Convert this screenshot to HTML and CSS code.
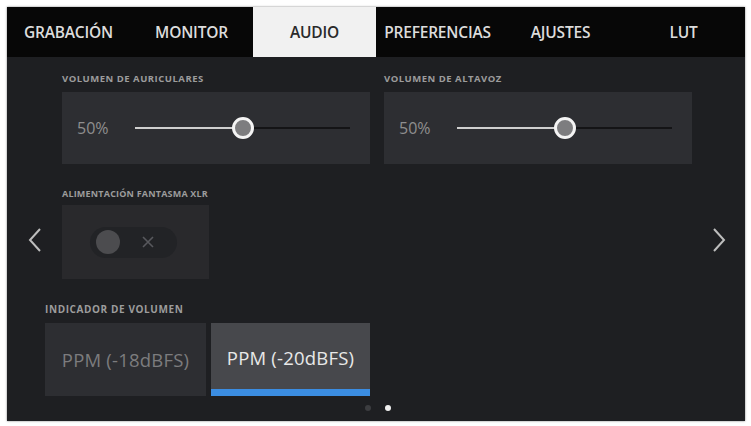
FILE: index.html
```html
<!DOCTYPE html>
<html lang="es">
<head>
<meta charset="utf-8">
<title>Audio</title>
<link rel="stylesheet" href="styles.css">
</head>
<body>
<div class="screen">
  <nav class="tabs">
    <div class="tab">GRABACIÓN</div>
    <div class="tab">MONITOR</div>
    <div class="tab active">AUDIO</div>
    <div class="tab">PREFERENCIAS</div>
    <div class="tab">AJUSTES</div>
    <div class="tab">LUT</div>
  </nav>
  <main class="content">
    <div class="row sliders">
      <section class="field">
        <div class="label">VOLUMEN DE AURICULARES</div>
        <div class="card slider-card">
          <span class="value">50%</span>
          <div class="track"><span class="fill" style="width:50%"></span><span class="thumb" style="left:50%"></span></div>
        </div>
      </section>
      <section class="field">
        <div class="label">VOLUMEN DE ALTAVOZ</div>
        <div class="card slider-card">
          <span class="value">50%</span>
          <div class="track"><span class="fill" style="width:50%"></span><span class="thumb" style="left:50%"></span></div>
        </div>
      </section>
    </div>
    <section class="field phantom">
      <div class="label label-2">ALIMENTACIÓN FANTASMA XLR</div>
      <div class="card toggle-card">
        <div class="toggle">
          <span class="knob"></span>
          <svg class="cross" width="12" height="12" viewBox="0 0 12 12"><path d="M1 1 L11 11 M11 1 L1 11" stroke="#58595d" stroke-width="1.6" fill="none"/></svg>
        </div>
      </div>
    </section>
    <section class="field meter">
      <div class="label label-3">INDICADOR DE VOLUMEN</div>
      <div class="options">
        <div class="option">PPM (-18dBFS)</div>
        <div class="option selected">PPM (-20dBFS)</div>
      </div>
    </section>
    <div class="dots"><span class="dot"></span><span class="dot on"></span></div>
    <svg class="chev chev-left" width="14" height="26" viewBox="0 0 14 26"><path d="M12 2 L2 13 L12 24" fill="none" stroke="#bdbdbd" stroke-width="2"/></svg>
    <svg class="chev chev-right" width="14" height="26" viewBox="0 0 14 26"><path d="M2 2 L12 13 L2 24" fill="none" stroke="#bdbdbd" stroke-width="2"/></svg>
  </main>
</div>
</body>
</html>
```
FILE: styles.css
```css
html, body {
  margin: 0;
  background: #ffffff;
}
body {
  padding: 7px 6px 5px 7px;
  font-family: "Open Sans", "Liberation Sans", sans-serif;
}
.screen {
  width: 738px;
  height: 414px;
  background: #1e1f22;
  box-shadow: 0 0 2px rgba(0,0,0,0.5);
  display: flex;
  flex-direction: column;
  overflow: hidden;
}
.tabs {
  display: grid;
  grid-template-columns: repeat(6, 1fr);
  height: 50px;
  background: #070707;
}
.tab {
  display: flex;
  align-items: center;
  justify-content: center;
  color: #dcdcdc;
  font-size: 15.5px;
  font-weight: 600;
  letter-spacing: -0.2px;
}
.tab.active {
  background: #f1f1f1;
  color: #2a2a2a;
}
.content {
  position: relative;
  flex: 1;
  display: flex;
  flex-direction: column;
  padding-top: 17px;
}
.row {
  display: flex;
  gap: 14px;
  padding-left: 55px;
}
.label {
  color: #9c9c9c;
  font-size: 9.5px;
  font-weight: 700;
  letter-spacing: 0.5px;
  line-height: 10px;
  height: 10px;
  margin-bottom: 8px;
}
.card {
  background: #2d2e32;
}
.slider-card {
  width: 308px;
  height: 72px;
  display: flex;
  align-items: center;
  padding-left: 15px;
  padding-right: 20px;
  box-sizing: border-box;
}
.value {
  width: 58px;
  color: #8f8f8f;
  font-size: 16px;
}
.track {
  position: relative;
  flex: 1;
  height: 2px;
  background: #141416;
}
.fill {
  position: absolute;
  left: 0;
  top: 0;
  height: 2px;
  background: #cfcfcf;
}
.thumb {
  position: absolute;
  top: 1px;
  width: 16px;
  height: 16px;
  border: 3px solid #f4f4f4;
  border-radius: 50%;
  background: #7d7d7f;
  transform: translate(-50%, -50%);
}
.phantom {
  padding-left: 55px;
  margin-top: 25px;
}
.label-2 {
  margin-bottom: 6px;
  font-size: 9px;
  letter-spacing: 0.2px;
}
.toggle-card {
  width: 147px;
  height: 74px;
  background: #29292c;
  display: flex;
  align-items: center;
  padding-left: 28px;
  box-sizing: border-box;
}
.toggle {
  width: 87px;
  height: 31px;
  border-radius: 16px;
  background: #222326;
  display: flex;
  align-items: center;
  padding-left: 6px;
  box-sizing: border-box;
}
.knob {
  width: 24px;
  height: 24px;
  border-radius: 50%;
  background: #4c4c4f;
}
.cross {
  margin-left: 22px;
}
.meter {
  padding-left: 38px;
  margin-top: 25px;
}
.label-3 {
  font-size: 10px;
  letter-spacing: 0.6px;
  margin-bottom: 9px;
}
.options {
  display: flex;
  gap: 5px;
}
.option {
  height: 73px;
  width: 161px;
  background: #2d2e32;
  color: #7c7c7e;
  font-size: 18.5px;
  display: flex;
  align-items: center;
  justify-content: center;
  box-sizing: border-box;
  letter-spacing: 0.2px;
}
.option.selected {
  width: 159px;
  background: #47484c;
  color: #e8e8e8;
  border-bottom: 7px solid #3b8de2;
  padding-top: 2px;
}
.dots {
  display: flex;
  justify-content: center;
  gap: 14px;
  margin-top: 9px;
  padding-left: 4px;
}
.dot {
  width: 6px;
  height: 6px;
  border-radius: 50%;
  background: #3c3d40;
}
.dot.on {
  background: #f0f0f0;
}
.chev {
  position: absolute;
  top: 170px;
}
.chev-left {
  left: 21px;
}
.chev-right {
  right: 19px;
}
```
